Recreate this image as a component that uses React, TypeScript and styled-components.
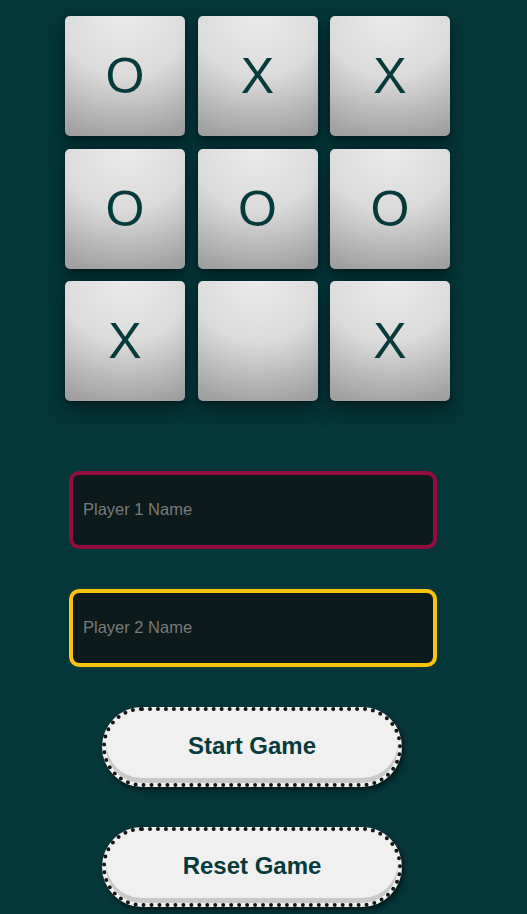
import React from "react";
import styled, { createGlobalStyle } from "styled-components";

const Global = createGlobalStyle`
  html, body { margin: 0; padding: 0; background: #05363a; }
  body { font-family: "Liberation Sans", Arial, sans-serif; }
`;

const Page = styled.main`
  display: flex;
  flex-direction: column;
  align-items: flex-start;
  padding-top: 16px;
  min-height: 914px;
  box-sizing: border-box;
`;

const Board = styled.div`
  display: grid;
  grid-template-columns: repeat(3, 120px);
  grid-auto-rows: 120px;
  column-gap: 12.5px;
  row-gap: 12.5px;
  margin-left: 65px;
`;

const Cell = styled.button`
  width: 120px;
  height: 120px;
  border: none;
  border-radius: 5px;
  padding: 0;
  background: radial-gradient(
    ellipse 125% 115% at 50% 0%,
    #ebebeb 0%,
    #dadada 45%,
    #a3a3a3 88%,
    #9a9a9a 100%
  );
  box-shadow: 0 10px 18px rgba(0, 0, 0, 0.35), 0 2px 4px rgba(0, 0, 0, 0.25);
  color: #063a3b;
  font-family: "Liberation Sans", Arial, sans-serif;
  font-size: 50px;
  line-height: 1;
  display: flex;
  align-items: center;
  justify-content: center;
  cursor: pointer;
`;

const NameInput = styled.input<{ $accent: string; $first?: boolean }>`
  box-sizing: border-box;
  width: 368px;
  height: 78px;
  margin-left: 69px;
  margin-top: ${(p) => (p.$first ? "70px" : "40px")};
  border: 4px solid ${(p) => p.$accent};
  border-radius: 10px;
  background: #0c1a1c;
  padding: 0 10px 2px;
  font-family: "Liberation Sans", Arial, sans-serif;
  font-size: 16.5px;
  color: #ddd;
  outline: none;
  &::placeholder { color: #7a7a7a; }
`;

const ActionButton = styled.button`
  box-sizing: border-box;
  width: 300px;
  height: 80px;
  margin-left: 102px;
  margin-top: 40px;
  border: 4px dotted #151515;
  border-radius: 40px;
  background: #f0f0f0;
  box-shadow: inset 0 -5px 0 #c9c9c9, 2px 3px 5px rgba(0, 0, 0, 0.55);
  color: #063a3b;
  font-family: "Liberation Sans", Arial, sans-serif;
  font-weight: 700;
  font-size: 24px;
  padding: 0 0 2px;
  cursor: pointer;
`;

const cells = ["O", "X", "X", "O", "O", "O", "X", "", "X"];

export default function App() {
  return (
    <>
      <Global />
      <Page>
        <Board>
          {cells.map((c, i) => (
            <Cell key={i}>{c}</Cell>
          ))}
        </Board>
        <NameInput $accent="#900d3e" $first placeholder="Player 1 Name" />
        <NameInput $accent="#fbc30b" placeholder="Player 2 Name" />
        <ActionButton>Start Game</ActionButton>
        <ActionButton>Reset Game</ActionButton>
      </Page>
    </>
  );
}
